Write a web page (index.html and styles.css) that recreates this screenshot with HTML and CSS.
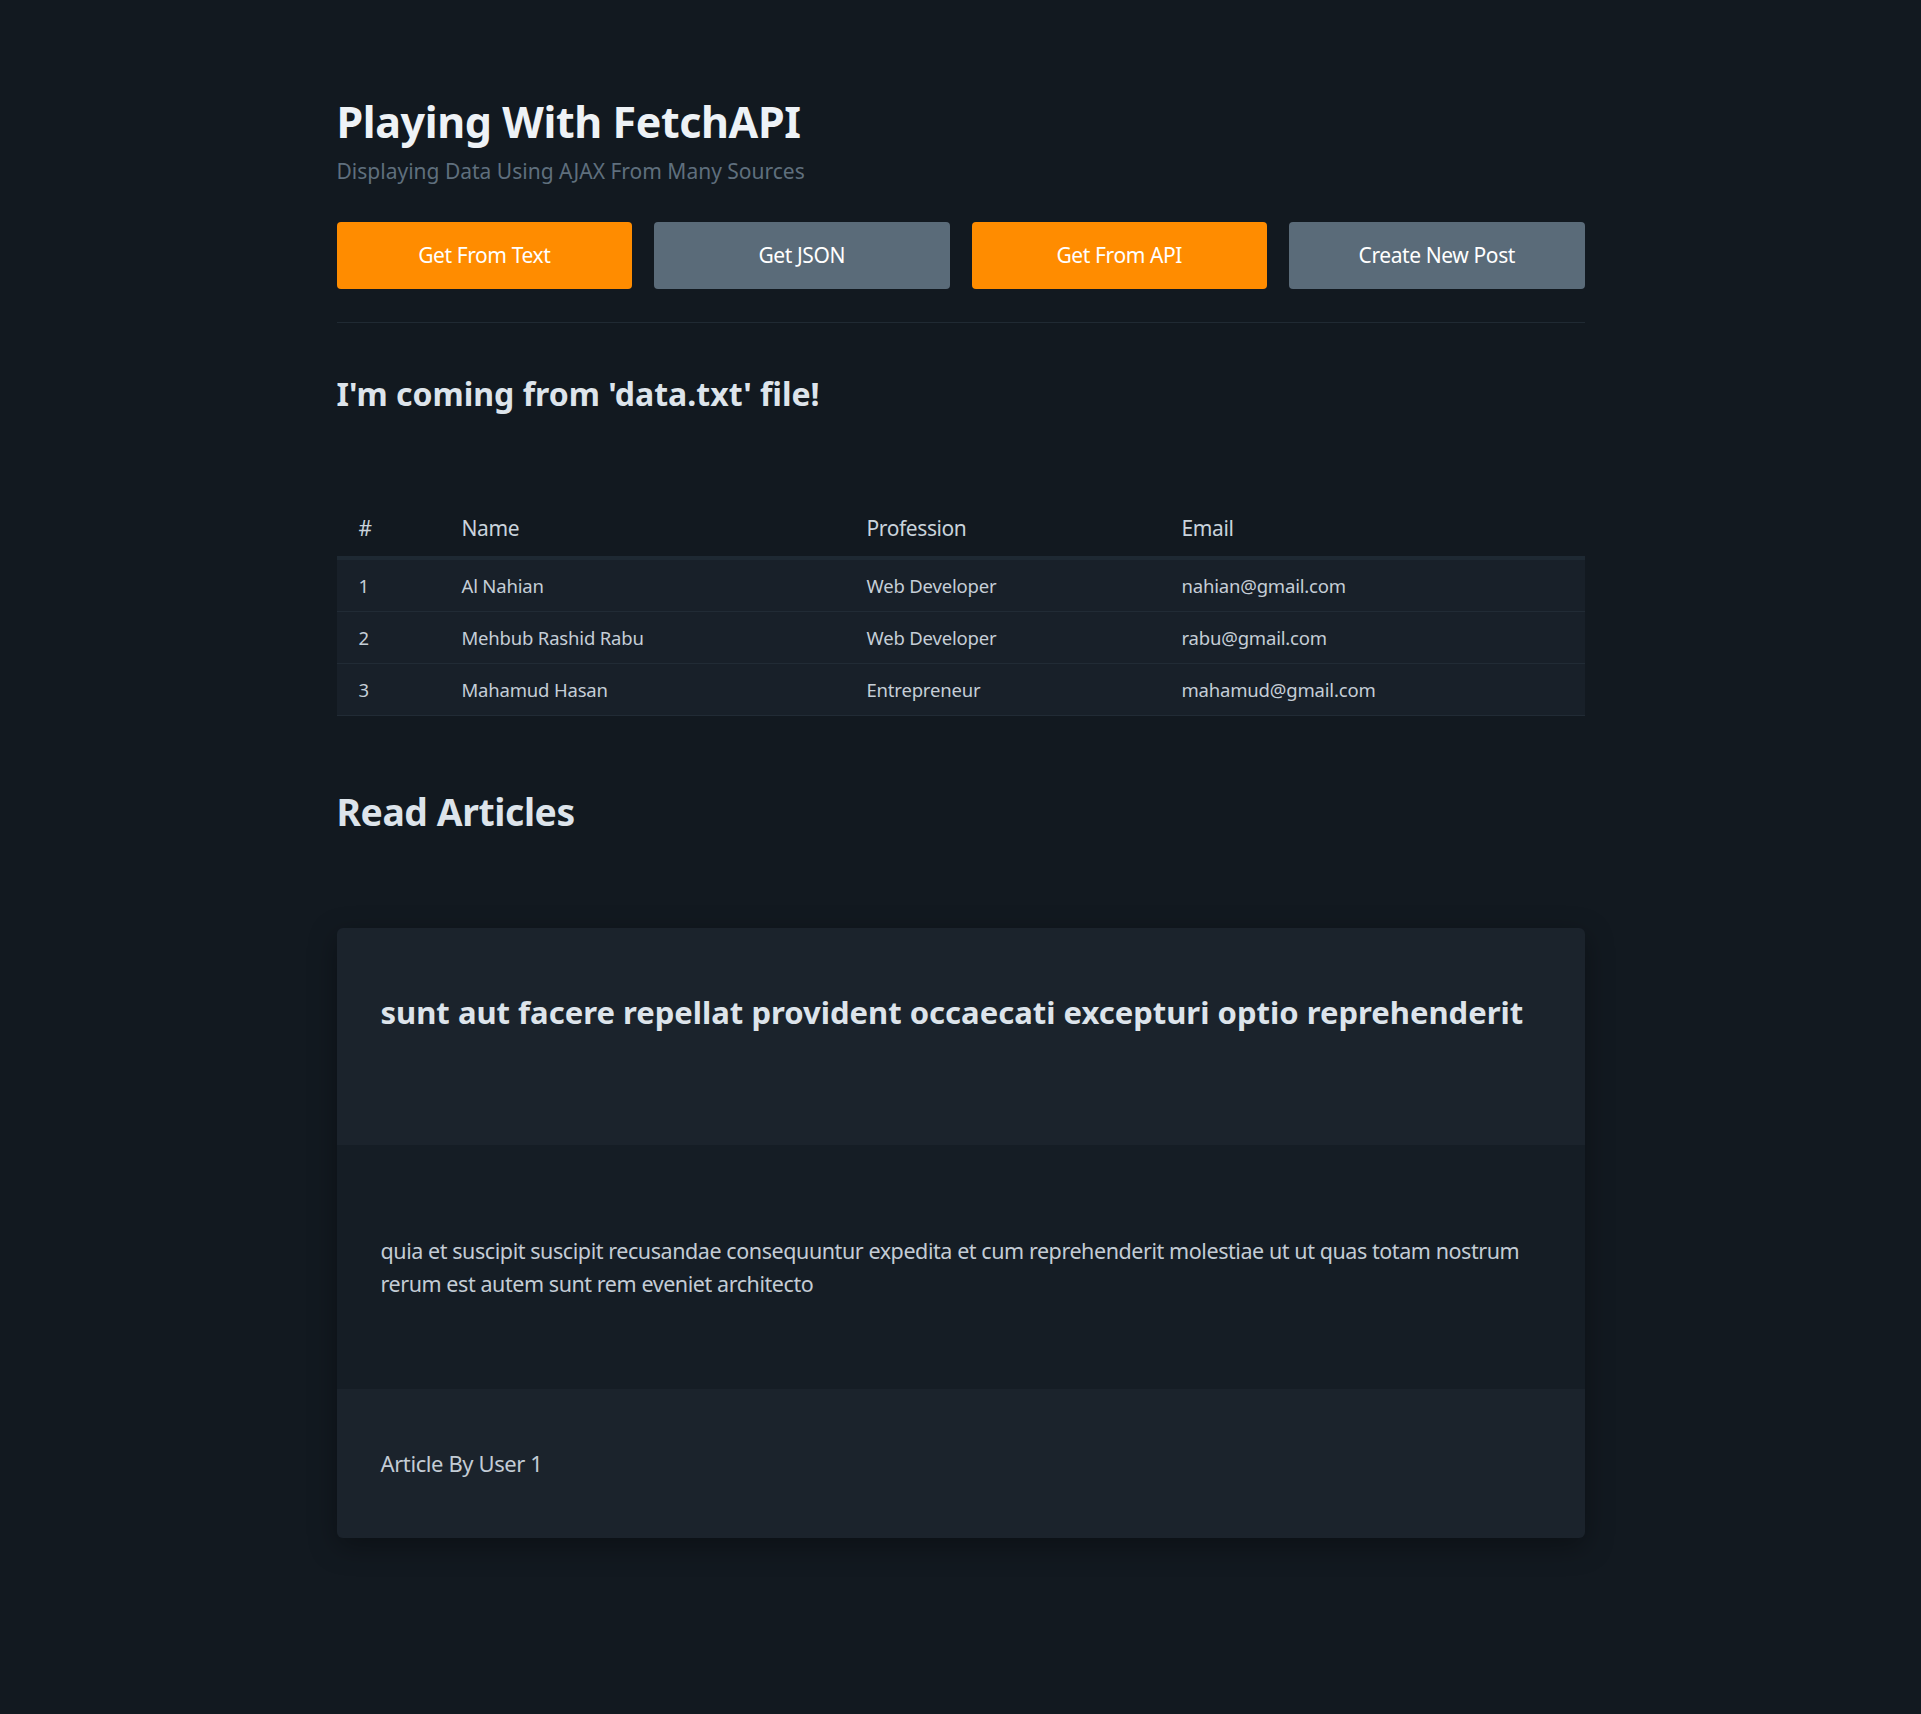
FILE: index.html
```html
<!DOCTYPE html>
<html lang="en">
<head>
<meta charset="utf-8">
<title>Playing With FetchAPI</title>
<link rel="stylesheet" href="styles.css">
</head>
<body>
<main class="container">
  <header class="page-head">
    <h1 class="title">Playing With FetchAPI</h1>
    <p class="subtitle">Displaying Data Using AJAX From Many Sources</p>
  </header>

  <div class="actions">
    <button class="btn btn-orange">Get From Text</button>
    <button class="btn btn-gray">Get JSON</button>
    <button class="btn btn-orange">Get From API</button>
    <button class="btn btn-gray">Create New Post</button>
  </div>

  <hr class="divider">

  <h2 class="text-output">I'm coming from 'data.txt' file!</h2>

  <table class="people">
    <colgroup>
      <col class="c-num"><col class="c-name"><col class="c-prof"><col class="c-email">
    </colgroup>
    <thead>
      <tr><th>#</th><th>Name</th><th>Profession</th><th>Email</th></tr>
    </thead>
    <tbody>
      <tr><td>1</td><td>Al Nahian</td><td>Web Developer</td><td>nahian@gmail.com</td></tr>
      <tr><td>2</td><td>Mehbub Rashid Rabu</td><td>Web Developer</td><td>rabu@gmail.com</td></tr>
      <tr><td>3</td><td>Mahamud Hasan</td><td>Entrepreneur</td><td>mahamud@gmail.com</td></tr>
    </tbody>
  </table>

  <h2 class="section-title">Read Articles</h2>

  <article class="card">
    <div class="card-header">
      <h3 class="card-title">sunt aut facere repellat provident occaecati excepturi optio reprehenderit</h3>
    </div>
    <div class="card-body">
      <p class="card-text">quia et suscipit suscipit recusandae consequuntur expedita et cum reprehenderit molestiae ut ut quas totam nostrum rerum est autem sunt rem eveniet architecto</p>
    </div>
    <div class="card-footer">Article By User 1</div>
  </article>
</main>
</body>
</html>
```

FILE: styles.css
```css
* { box-sizing: border-box; }

html, body {
  margin: 0;
  padding: 0;
  background: #121920;
  min-height: 100%;
}

body {
  font-family: "Noto Sans", "Open Sans", sans-serif;
  color: #d3dbe3;
  letter-spacing: -0.025em;
}

.container {
  width: 1248px;
  margin: 0 auto;
  padding-top: 96px;
  padding-bottom: 170px;
}

.title {
  margin: 0;
  font-size: 43px;
  line-height: 1.2;
  font-weight: 700;
  color: #eef2f6;
}

.subtitle {
  margin: 8px 0 0;
  font-size: 21px;
  line-height: 30px;
  letter-spacing: 0;
  color: #5f6f7d;
}

.actions {
  margin-top: 36px;
  display: grid;
  grid-template-columns: repeat(4, 1fr);
  gap: 22px;
}

.btn {
  height: 67px;
  border: 0;
  border-radius: 4px;
  font-family: inherit;
  letter-spacing: inherit;
  font-size: 21px;
  color: #ffffff;
  cursor: pointer;
}

.btn-orange { background: #ff8c00; }
.btn-gray { background: #5a6b79; }

.divider {
  margin: 33px 0 0;
  border: 0;
  border-top: 1px solid #202a33;
  height: 0;
}

.text-output {
  margin: 53px 0 0;
  font-size: 32px;
  line-height: 36px;
  font-weight: 700;
  letter-spacing: 0;
  color: #dde4eb;
}

.people {
  margin-top: 89px;
  width: 100%;
  border-collapse: collapse;
  table-layout: fixed;
}

.c-num { width: 103px; }
.c-name { width: 405px; }
.c-prof { width: 315px; }
.c-email { width: 425px; }

.people th,
.people td {
  text-align: left;
  padding: 12px 22px;
}

.people th {
  font-size: 21px;
  line-height: 1.5;
  font-weight: 400;
  color: #c9d3dc;
  border-bottom: 4px solid #1e2933;
}

.people td {
  font-size: 18.5px;
  line-height: 27px;
  letter-spacing: -0.01em;
  color: #c5ced7;
  background: #182029;
  border-bottom: 1px solid #212b35;
}

.section-title {
  margin: 72px 0 0;
  font-size: 37.3px;
  line-height: 48px;
  font-weight: 700;
  color: #dde4eb;
}

.card {
  margin-top: 92px;
  border-radius: 6px;
  overflow: hidden;
  box-shadow: 0 8px 28px rgba(0, 0, 0, 0.35);
}

.card-header {
  background: #1b232c;
  padding: 66px 44px 114px;
}

.card-title {
  margin: 0;
  font-size: 31px;
  line-height: 1.2;
  font-weight: 700;
  letter-spacing: 0;
  color: #dde4eb;
}

.card-body {
  background: #151d25;
  padding: 89px 44px;
}

.card-text {
  margin: 0;
  font-size: 21.5px;
  line-height: 33px;
  letter-spacing: -0.02em;
  color: #c3ccd5;
}

.card-footer {
  background: #1b232c;
  padding: 58px 44px;
  font-size: 22px;
  line-height: 33px;
  color: #c3ccd5;
}
```
